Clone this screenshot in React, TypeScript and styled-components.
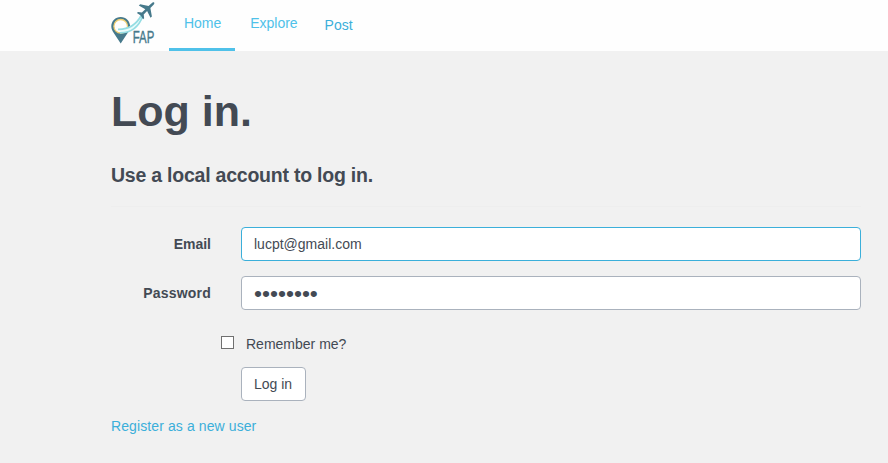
import React from 'react';
import styled, { createGlobalStyle } from 'styled-components';

const GlobalStyle = createGlobalStyle`
  *, *::before, *::after { box-sizing: border-box; }
  body {
    margin: 0;
    background: #f1f1f1;
    color: #434a54;
    font: 14px/20px "Liberation Sans", Arial, sans-serif;
    overflow: hidden;
  }
`;

const Page = styled.div`
  height: 463px;
  background: #f1f1f1;
`;

const Header = styled.header`
  display: flex;
  height: 51px;
  padding-left: 108px;
  background: #fefefe;
`;

const Logo = styled.svg`
  display: block;
  width: 50px;
  height: 46px;
  margin-right: 11px;
  overflow: visible;
`;

const Nav = styled.nav`
  display: flex;
`;

const NavLink = styled.a<{ $active?: boolean; $plain?: boolean }>`
  height: 51px;
  padding: ${(p) => (p.$plain ? '15px 10px 0 13px' : '13px 14px 0 15px')};
  border-bottom: 3px solid ${(p) => (p.$active ? '#4fc1e9' : 'transparent')};
  color: ${(p) => (p.$plain ? '#3bafda' : '#4fc1e9')};
  letter-spacing: -0.02px;
  text-decoration: none;
`;

const Main = styled.main`
  width: 750px;
  margin-left: 111px;
  padding-top: 35px;
`;

const Title = styled.h1`
  margin: 0;
  font-size: 43px;
  line-height: 50px;
`;

const Subtitle = styled.h2`
  margin: 26px 0 0;
  font-size: 19.5px;
  letter-spacing: -0.23px;
  line-height: 26px;
`;

const Divider = styled.hr`
  height: 1px;
  margin: 18px 0 20px;
  border: 0;
  background: #eeeeee;
`;

const Field = styled.div`
  display: grid;
  grid-template-columns: 100px 620px;
  column-gap: 30px;
  align-items: center;
  height: 34px;
  margin-bottom: 15px;
`;

const Label = styled.label<{ $spacing?: string }>`
  font-weight: bold;
  letter-spacing: ${(p) => p.$spacing ?? 'normal'};
  text-align: right;
`;

const Input = styled.input<{ $focused?: boolean }>`
  width: 100%;
  height: 34px;
  margin: 0;
  padding: 6px 12px;
  border: 1px solid ${(p) => (p.$focused ? '#3bafda' : '#aab2bd')};
  border-radius: 4px;
  outline: none;
  background: #fff;
  color: #434a54;
  font: 14px/20px "Liberation Sans", Arial, sans-serif;
`;

const PasswordInput = styled(Input)`
  padding: 4px 12px;
  font-size: 22.8px;
  line-height: 24px;
`;

const Remember = styled.label`
  display: flex;
  align-items: center;
  height: 20px;
  margin: 24px 0 13px 110px;
`;

const Checkbox = styled.input`
  appearance: none;
  width: 13px;
  height: 13px;
  margin: 0 12px 3px 0;
  border: 1px solid #707070;
  background: #fff;
`;

const Button = styled.button`
  display: block;
  width: 65px;
  height: 34px;
  margin: 0 0 15px 130px;
  padding: 0 1px 0 0;
  border: 1px solid #aab2bd;
  border-radius: 4px;
  background: #fff;
  color: #434a54;
  font: 14px/20px "Liberation Sans", Arial, sans-serif;
`;

const RegisterLink = styled.a`
  color: #3bafda;
  letter-spacing: 0.1px;
  text-decoration: none;
`;

function FapLogo() {
  return (
    <Logo viewBox="0 0 50 46" role="img" aria-label="FAP">
      <path
        d="M12.7 17C7.4 17 3.3 21.2 3.3 26.3c0 2.800 1.200 4.900 2.800 7.200L12.700 43.400l6.600-9.900c1.600-2.300 2.800-4.400 2.800-7.200C22.100 21.200 18 17 12.700 17Z"
        fill="#46798b"
      />
      <circle cx="12.700" cy="26.300" r="6.800" fill="#fefefe" stroke="#f0cf72" strokeWidth="1.300" />
      <path d="M11 29.500C21 29 29 23.500 34.500 13L36 15C32 26 24 33 13 32.500Z" fill="#e9fbfb" />
      <path d="M10 29.300C20 29.500 28.500 24.500 33.500 15" fill="none" stroke="#95dde3" strokeWidth="1.700" />
      <path d="M12 32.800C23 33 31 26.500 35 15.500" fill="none" stroke="#95dde3" strokeWidth="1.700" />
      <g transform="translate(38.900 9.500) rotate(46) scale(1.08)" fill="#46798b">
        <path d="M0-9.300c.9 0 1.200 1.400 1.200 2.800v3.200L7.800 1.100v1.800L1.200.900v4.400l2.900 2.200v1.400L0 8l-4.100.900V7.500l2.900-2.200V.900L-7.800 2.900V1.100l6.600-4.400v-3.200c0-1.400.3-2.800 1.200-2.800Z" />
      </g>
      <text
        x="24.800"
        y="43"
        fill="#46798b"
        stroke="#46798b"
        strokeWidth=".4"
        fontFamily="Liberation Sans, Arial, sans-serif"
        fontSize="17.200"
        textLength="21.500"
        lengthAdjust="spacingAndGlyphs"
      >
        FAP
      </text>
    </Logo>
  );
}

export default function App() {
  return (
    <Page>
      <GlobalStyle />
      <Header>
        <FapLogo />
        <Nav>
          <NavLink $active>Home</NavLink>
          <NavLink>Explore</NavLink>
          <NavLink $plain>Post</NavLink>
        </Nav>
      </Header>
      <Main>
        <Title>Log in.</Title>
        <Subtitle>Use a local account to log in.</Subtitle>
        <Divider />
        <Field>
          <Label htmlFor="email">Email</Label>
          <Input id="email" $focused defaultValue="lucpt@gmail.com" spellCheck={false} />
        </Field>
        <Field>
          <Label htmlFor="password" $spacing="0.2px">Password</Label>
          <PasswordInput id="password" type="password" defaultValue="password" />
        </Field>
        <Remember>
          <Checkbox type="checkbox" />
          Remember me?
        </Remember>
        <Button type="button">Log in</Button>
        <RegisterLink>Register as a new user</RegisterLink>
      </Main>
    </Page>
  );
}
